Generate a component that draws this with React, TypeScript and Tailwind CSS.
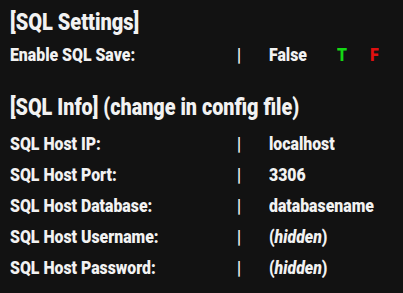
import React from "react";

const rows: { label: string; value: React.ReactNode }[] = [
  { label: "SQL Host IP:", value: "localhost" },
  { label: "SQL Host Port:", value: "3306" },
  { label: "SQL Host Database:", value: "databasename" },
  { label: "SQL Host Username:", value: <>(<i>hidden</i>)</> },
  { label: "SQL Host Password:", value: <>(<i>hidden</i>)</> },
];

function T({ children, className = "" }: { children: React.ReactNode; className?: string }) {
  return (
    <span className={"inline-block origin-left scale-x-[0.88] whitespace-nowrap " + className}>
      {children}
    </span>
  );
}

function Row({ label, children }: { label: string; children: React.ReactNode }) {
  return (
    <div className="flex h-[31px] items-center text-[18px] font-black">
      <div className="w-[227px] shrink-0">
        <T>{label}</T>
      </div>
      <div className="w-[32px] shrink-0">
        <T>|</T>
      </div>
      <div className="flex items-center">{children}</div>
    </div>
  );
}

export default function App() {
  return (
    <div
      className="w-[403px] h-[293px] bg-[#121212] text-[#f2f2f2] pl-[10px] pt-[8px] overflow-hidden"
      style={{ fontFamily: "Roboto, sans-serif" }}
    >
      <div className="h-[31px] flex items-center text-[23px] font-black">
        <span className="inline-block origin-left scale-x-[0.87] whitespace-nowrap">[SQL Settings]</span>
      </div>
      <Row label="Enable SQL Save:">
        <span className="w-[68px]">
          <T>False</T>
        </span>
        <span className="w-[33px] text-[#14d814]">
          <T>T</T>
        </span>
        <span className="text-[#e01010]">
          <T>F</T>
        </span>
      </Row>
      <div className="h-[31px] mt-[23px] flex items-center text-[23px] font-black">
        <span className="inline-block origin-left scale-x-[0.86] whitespace-nowrap">
          [SQL Info] (change in config file)
        </span>
      </div>
      <div className="mt-[4px]">
        {rows.map((r) => (
          <Row key={r.label} label={r.label}>
            <T>{r.value}</T>
          </Row>
        ))}
      </div>
    </div>
  );
}
